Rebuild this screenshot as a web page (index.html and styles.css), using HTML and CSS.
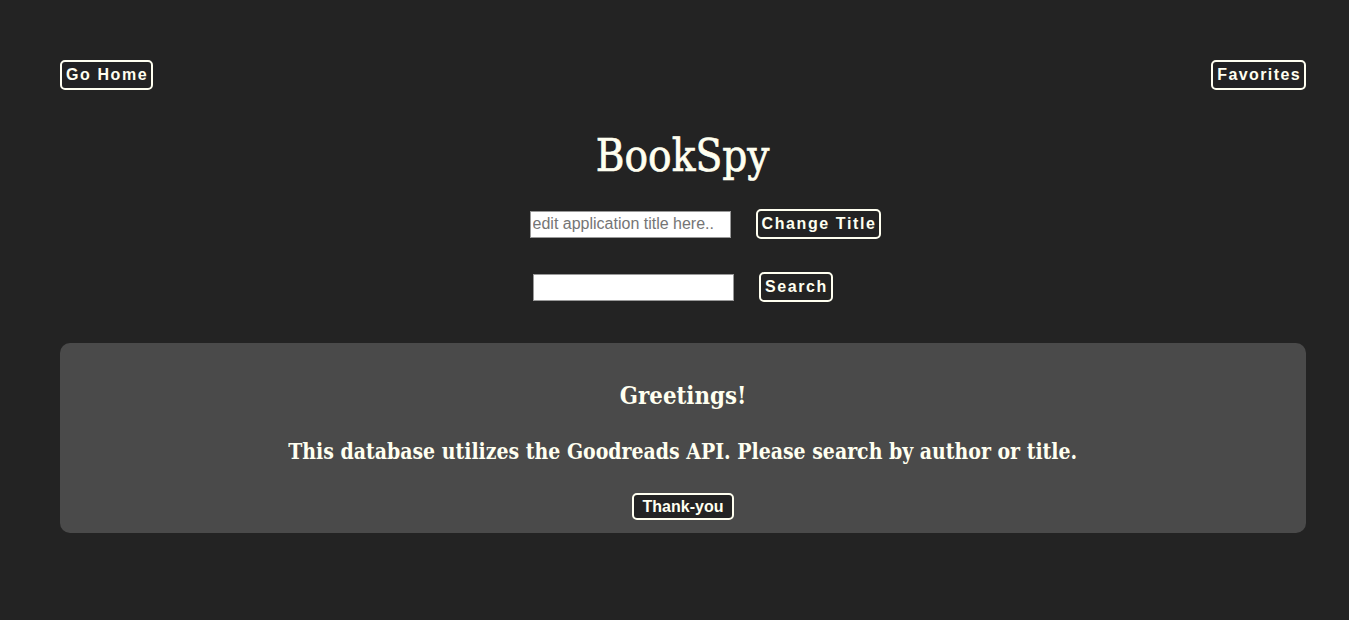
FILE: index.html
```html
<!DOCTYPE html>
<html>
<head>
<meta charset="utf-8">
<link rel="stylesheet" href="styles.css">
</head>
<body>
<div class="page">
  <nav class="nav">
    <button class="btn">Go Home</button>
    <button class="btn btn-fav">Favorites</button>
  </nav>
  <h1 class="title">BookSpy</h1>
  <div class="row row-title">
    <input class="field" type="text" placeholder="edit application title here..">
    <button class="btn">Change Title</button>
  </div>
  <div class="row row-search">
    <input class="field" type="text">
    <button class="btn">Search</button>
  </div>
  <section class="card">
    <h2 class="card-head">Greetings!</h2>
    <p class="card-text">This database utilizes the Goodreads API. Please search by author or title.</p>
    <button class="btn btn-plain">Thank-you</button>
  </section>
</div>
</body>
</html>
```
FILE: styles.css
```css
html, body {
  margin: 0;
  padding: 0;
  background: #232323;
  color: #fffff0;
}
.page {
  width: 1246px;
  margin-left: 60px;
  padding-top: 60px;
  display: flex;
  flex-direction: column;
  align-items: center;
}
.nav {
  width: 100%;
  display: flex;
  justify-content: space-between;
}
.btn {
  font-family: "Liberation Sans", Arial, sans-serif;
  font-weight: bold;
  font-size: 16px;
  letter-spacing: 1.6px;
  color: #fffff0;
  background: #232323;
  border: 2px solid #fffff0;
  border-radius: 5px;
  padding: 4px 3px 4px 4px;
  line-height: 18px;
  cursor: pointer;
}
.btn-fav {
  letter-spacing: 1.4px;
}
.title {
  font-family: "DejaVu Serif", serif;
  font-weight: normal;
  font-size: 44px;
  line-height: 48px;
  margin: 42px 0 0 0;
  transform: scaleX(0.89);
  -webkit-text-stroke: 0.7px #fffff0;
}
.row {
  display: flex;
  align-items: center;
  gap: 25px;
}
.row-title {
  margin-top: 29px;
  padding-left: 45px;
}
.row-search { margin-top: 33px; }
.field {
  box-sizing: border-box;
  width: 201px;
  height: 27px;
  border: 1px solid #999;
  background: #fff;
  font-family: "Liberation Sans", Arial, sans-serif;
  font-size: 16px;
  padding: 0 2px;
  margin: 0;
}
.field::placeholder { color: #757575; }
.card {
  box-sizing: border-box;
  width: 100%;
  margin-top: 41px;
  height: 190px;
  background: #4a4a4a;
  border-radius: 10px;
  display: flex;
  flex-direction: column;
  align-items: center;
  padding-top: 39px;
}
.card-head {
  font-family: "DejaVu Serif", serif;
  font-size: 24px;
  font-weight: bold;
  margin: 0;
  line-height: 28px;
  transform: scaleX(0.89);
}
.card-text {
  font-family: "DejaVu Serif", serif;
  font-size: 22px;
  font-weight: bold;
  margin: 28px 0 0 0;
  line-height: 26px;
  transform: scaleX(0.86);
  white-space: nowrap;
}
.btn-plain {
  letter-spacing: 0;
  margin-top: 29px;
  padding: 2px 9px;
  line-height: 19px;
}
```
